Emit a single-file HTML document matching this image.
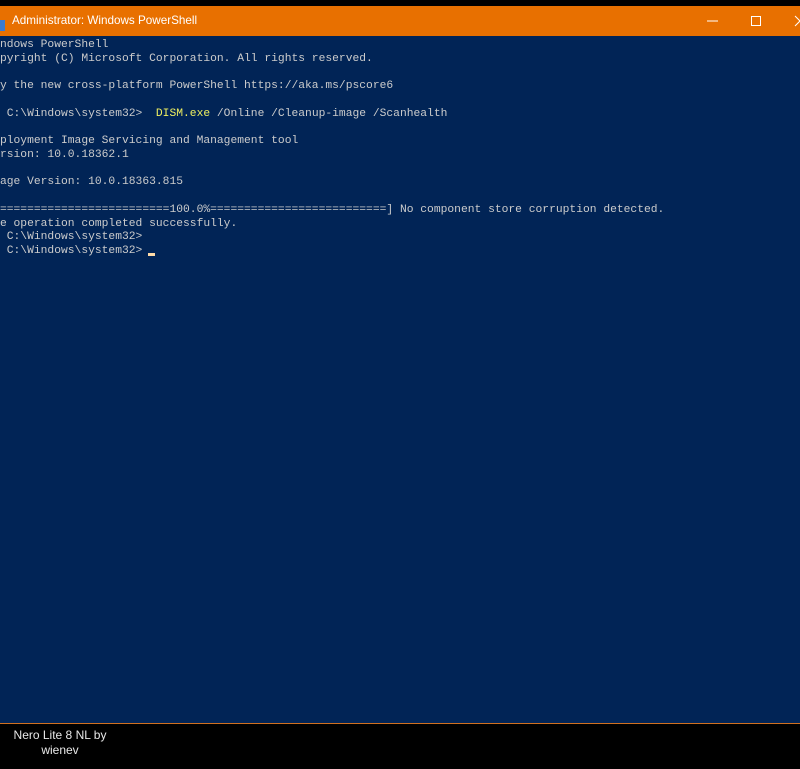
<!DOCTYPE html>
<html><head><style>
html,body{margin:0;padding:0;width:800px;height:769px;overflow:hidden;background:#000;}
.title{position:absolute;left:0;top:6px;width:800px;height:30px;background:#e87000;}
.title span{position:absolute;left:12px;top:8px;font:11.7px "Liberation Sans",sans-serif;color:#fff;}
.ico{position:absolute;left:0;top:14px;width:5px;height:11px;background:#3b7bd0;}
.con{position:absolute;left:0;top:36px;width:800px;height:687px;background:#012456;border-bottom:1px solid #d07020;overflow:hidden;}
pre{position:absolute;left:-13.6px;top:3px;margin:0;font:11.3px/13.73px "Liberation Mono",monospace;color:#cccccc;}
.y{color:#f0f060;}
.cur{position:absolute;left:148px;top:217px;width:7px;height:3px;background:#fedba9;}
.foot{position:absolute;left:0;top:728px;width:120px;text-align:center;font:12px/15px "Liberation Sans",sans-serif;color:#e8e8e8;}
</style></head><body>
<div class="title"><div class="ico"></div><span>Administrator: Windows PowerShell</span>
<svg style="position:absolute;left:700px;top:0" width="100" height="30">
<line x1="7" y1="15" x2="18" y2="15" stroke="#fff" stroke-width="1"/>
<rect x="51.5" y="10.5" width="9" height="9" fill="none" stroke="#fff" stroke-width="1"/>
<line x1="95" y1="10" x2="105" y2="20" stroke="#fff"/><line x1="105" y1="10" x2="95" y2="20" stroke="#fff"/>
</svg></div>
<div class="con">
<pre>Windows PowerShell
Copyright (C) Microsoft Corporation. All rights reserved.

Try the new cross-platform PowerShell https://aka.ms/pscore6

PS C:\Windows\system32>  <span class="y">DISM.exe</span> /Online /Cleanup-image /Scanhealth

Deployment Image Servicing and Management tool
Version: 10.0.18362.1

Image Version: 10.0.18363.815

[==========================100.0%==========================] No component store corruption detected.
The operation completed successfully.
PS C:\Windows\system32>
PS C:\Windows\system32>
</pre>
<div class="cur"></div>
</div>
<div class="foot">Nero Lite 8 NL by<br>wienev</div>
</body></html>
